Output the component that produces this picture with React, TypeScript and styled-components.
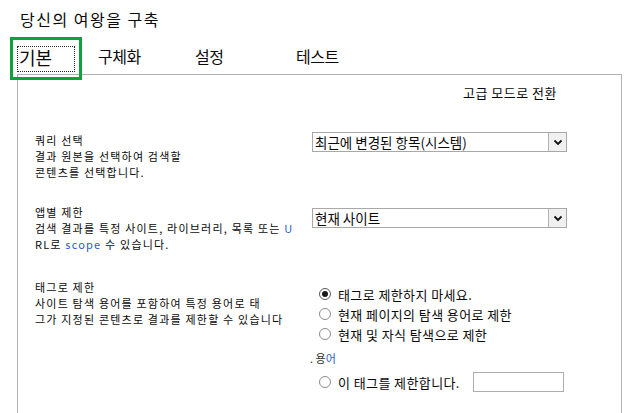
import React from 'react'
import styled, { createGlobalStyle } from 'styled-components'

const GlobalStyle = createGlobalStyle`
  html, body {
    margin: 0;
    padding: 0;
    background: #ffffff;
  }
  body {
    font-family: "Noto Sans CJK KR", "Noto Sans", sans-serif;
    color: #0a0a0a;
    overflow: hidden;
  }
`

const Page = styled.div`
  width: 627px;
  height: 413px;
  padding-top: 9px;
  box-sizing: border-box;
  overflow: hidden;
`

const Title = styled.div`
  margin-left: 20px;
  font-size: 16px;
  line-height: 20px;
  letter-spacing: 1.5px;
`

const TabBar = styled.div`
  position: relative;
  z-index: 1;
  display: flex;
  height: 43px;
  margin-top: 8px;
  margin-bottom: -6px;
  padding-left: 10px;
`

const ActiveTab = styled.div`
  width: 72px;
  height: 43px;
  box-sizing: border-box;
  border: 3px solid #10a03c;
  padding: 6px 4px 5px 4px;
  background: transparent;
`

const FocusRing = styled.div`
  height: 100%;
  box-sizing: border-box;
  border: 1px dotted #222222;
  padding-left: 1px;
  font-size: 18px;
  line-height: 20px;
  background: #ffffff;
`

const Tab = styled.div<{ $w: number }>`
  width: ${(p) => p.$w}px;
  box-sizing: border-box;
  padding: 9px 0 0 16px;
  font-size: 16px;
  line-height: 20px;
  letter-spacing: -0.5px;
`

const Panel = styled.div`
  margin-left: 17px;
  width: 605px;
  min-height: 360px;
  box-sizing: border-box;
  border: 1px solid #b2b2b2;
  border-bottom: none;
`

const ModeLink = styled.div`
  margin-top: 10px;
  padding-right: 64px;
  text-align: right;
  font-size: 13px;
  line-height: 15px;
  letter-spacing: 0.5px;
`

const Row = styled.div<{ $top: number }>`
  display: grid;
  grid-template-columns: 294px 1fr;
  margin-top: ${(p) => p.$top}px;
`

const Label = styled.div`
  padding-left: 17px;
  font-size: 11px;
  line-height: 16px;
  letter-spacing: 1.2px;
`

const Blue = styled.span`
  color: #1f5cbf;
`

const Select = styled.div<{ $offset: number }>`
  display: flex;
  width: 255px;
  height: 20px;
  margin-top: ${(p) => p.$offset}px;
  box-sizing: border-box;
  border: 1px solid #a8a8a8;
  background: #ffffff;
`

const SelectText = styled.div`
  flex: 1;
  padding-left: 2px;
  font-size: 13.5px;
  line-height: 18px;
  white-space: nowrap;
  overflow: hidden;
`

const SelectButton = styled.div`
  width: 18px;
  height: 18px;
  box-sizing: border-box;
  border-left: 1px solid #b4b4b4;
  background: #f0f0f0;
  display: flex;
  align-items: center;
  justify-content: center;
`

const RadioList = styled.div`
  display: flex;
  flex-direction: column;
  margin-top: 5px;
`

const RadioItem = styled.div<{ $gapTop?: number }>`
  display: flex;
  align-items: center;
  gap: 7px;
  height: 20px;
  margin-top: ${(p) => p.$gapTop ?? 0}px;
  padding-left: 7px;
  font-size: 13px;
  letter-spacing: 0.4px;
`

const Circle = styled.span<{ $checked?: boolean }>`
  flex: none;
  width: 12px;
  height: 12px;
  box-sizing: border-box;
  border-radius: 50%;
  border: 1px solid ${(p) => (p.$checked ? '#5a5a5a' : '#8c8c8c')};
  background: #ffffff;
  display: flex;
  align-items: center;
  justify-content: center;

  &::after {
    content: '';
    display: ${(p) => (p.$checked ? 'block' : 'none')};
    width: 6px;
    height: 6px;
    border-radius: 50%;
    background: #1a1a1a;
  }
`

const TermLine = styled.div`
  height: 20px;
  margin-top: 4px;
  margin-left: -2px;
  font-size: 11px;
  line-height: 20px;
  color: #333333;
`

const TextInput = styled.div`
  flex: none;
  width: 91px;
  height: 20px;
  margin-left: 6px;
  box-sizing: border-box;
  border: 1px solid #adadad;
  background: #ffffff;
`

const Chevron = () => (
  <svg width="10" height="7" viewBox="0 0 10 7">
    <path d="M1.5 1.5 L5 5 L8.5 1.5" fill="none" stroke="#111" strokeWidth="1.8" />
  </svg>
)

const Dropdown = ({ value, offset }: { value: React.ReactNode; offset: number }) => (
  <Select $offset={offset}>
    <SelectText>{value}</SelectText>
    <SelectButton>
      <Chevron />
    </SelectButton>
  </Select>
)

export default function App() {
  return (
    <>
      <GlobalStyle />
      <Page>
        <Title>당신의 여왕을 구축</Title>
        <TabBar>
          <ActiveTab>
            <FocusRing>기본</FocusRing>
          </ActiveTab>
          <Tab $w={97}>구체화</Tab>
          <Tab $w={101}>설정</Tab>
          <Tab $w={100}>테스트</Tab>
        </TabBar>
        <Panel>
          <ModeLink>고급 모드로 전환</ModeLink>

          <Row $top={32}>
            <Label>
              쿼리 선택
              <br />
              결과 원본을 선택하여 검색할
              <br />
              콘텐츠를 선택합니다.
            </Label>
            <Dropdown value="최근에 변경된 항목(시스템)" offset={0} />
          </Row>

          <Row $top={24}>
            <Label>
              앱별 제한
              <br />
              검색 결과를 특정 사이트, 라이브러리, 목록 또는 <Blue>U</Blue>
              <br />
              RL로 <Blue>scope</Blue> 수 있습니다.
            </Label>
            <Dropdown value="현재 사이트" offset={4} />
          </Row>

          <Row $top={27}>
            <Label>
              태그로 제한
              <br />
              사이트 탐색 용어를 포함하여 특정 용어로 태
              <br />
              그가 지정된 콘텐츠로 결과를 제한할 수 있습니다
            </Label>
            <RadioList>
              <RadioItem>
                <Circle $checked />
                태그로 제한하지 마세요.
              </RadioItem>
              <RadioItem>
                <Circle />
                현재 페이지의 탐색 용어로 제한
              </RadioItem>
              <RadioItem>
                <Circle />
                현재 및 자식 탐색으로 제한
              </RadioItem>
              <TermLine>
                . 용<Blue>어</Blue>
              </TermLine>
              <RadioItem $gapTop={4}>
                <Circle />
                이 태그를 제한합니다.
                <TextInput />
              </RadioItem>
            </RadioList>
          </Row>
        </Panel>
      </Page>
    </>
  )
}
